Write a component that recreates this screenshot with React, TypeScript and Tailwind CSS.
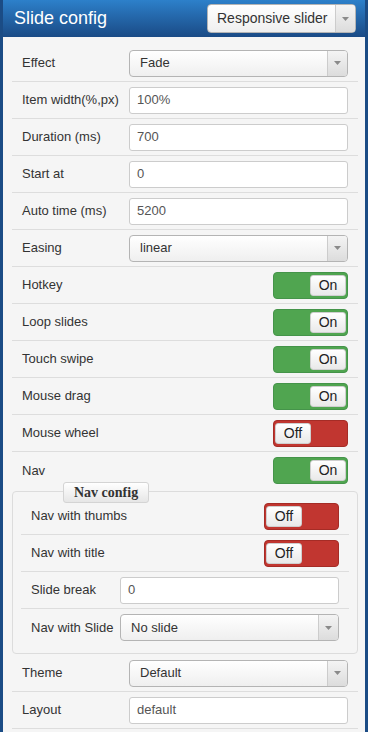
import type { ReactNode } from 'react';

const font = { fontFamily: '"Liberation Sans", Arial, sans-serif' };

const Arrow = ({ className = '' }: { className?: string }) => (
  <div
    className={`flex w-[20px] shrink-0 items-center justify-center self-stretch border-l border-[#ccc] bg-gradient-to-b from-[#f4f4f4] to-[#dcdcdc] ${className}`}
  >
    <svg width="7" height="4" viewBox="0 0 7 4">
      <path d="M0 0h7L3.5 4z" fill="#8a8a8a" />
    </svg>
  </div>
);

const Select = ({ value }: { value: string }) => (
  <div className="flex h-[27px] flex-1 overflow-hidden rounded-[4px] border border-[#b4b4b4] bg-gradient-to-b from-white to-[#efefef]">
    <span className="flex flex-1 items-center pl-[10px] text-[13px] text-[#333]">
      {value}
    </span>
    <Arrow />
  </div>
);

const Input = ({ value }: { value: string }) => (
  <div className="flex h-[27px] flex-1 items-center rounded-[3px] border border-[#ccc] bg-white pl-[7px] text-[13px] text-[#555]">
    {value}
  </div>
);

const Toggle = ({ on }: { on: boolean }) =>
  on ? (
    <div className="flex h-[27px] w-[75px] shrink-0 justify-end rounded-[4px] border border-[#45944a] bg-[#50a550] p-[2px] pr-[1px]">
      <div className="flex w-[36px] items-center justify-center rounded-[3px] border border-[#cfcfcf] bg-gradient-to-b from-white to-[#e9e9e9] text-[14px] text-[#222]">
        On
      </div>
    </div>
  ) : (
    <div className="flex h-[27px] w-[75px] shrink-0 justify-start rounded-[4px] border border-[#a52c26] bg-[#c13630] p-[2px] pl-[1px]">
      <div className="flex w-[36px] items-center justify-center rounded-[3px] border border-[#cfcfcf] bg-gradient-to-b from-white to-[#e9e9e9] text-[14px] text-[#222]">
        Off
      </div>
    </div>
  );

const Row = ({
  label,
  children,
  inner = false,
  last = false,
}: {
  label: string;
  children: ReactNode;
  inner?: boolean;
  last?: boolean;
}) => (
  <div
    className={`flex h-[37px] items-center px-[10px] ${
      last ? '' : 'border-b border-[#dddddd]'
    }`}
  >
    <span
      className={`${inner ? 'w-[89px]' : 'w-[107px]'} shrink-0 whitespace-nowrap text-[13px] text-[#333]`}
    >
      {label}
    </span>
    {children}
  </div>
);

const SwitchRow = ({
  label,
  on,
  inner = false,
  last = false,
}: {
  label: string;
  on: boolean;
  inner?: boolean;
  last?: boolean;
}) => (
  <Row label={label} inner={inner} last={last}>
    <div className="flex flex-1 justify-end">
      <Toggle on={on} />
    </div>
  </Row>
);

export default function App() {
  return (
    <div
      style={font}
      className="h-[732px] w-[368px] overflow-hidden border-x-[3px] border-[#1b4c85] bg-[#f5f5f5]"
    >
      <div className="flex h-[37px] items-center justify-between bg-gradient-to-b from-[#2d80ca] to-[#1a4b86] pl-[11px] pr-[9px]">
        <span className="text-[18px] text-white">Slide config</span>
        <div className="flex h-[29px] w-[149px] overflow-hidden rounded-[4px] border border-[#b4b4b4] bg-gradient-to-b from-white to-[#efefef]">
          <span className="flex flex-1 items-center whitespace-nowrap pl-[9px] text-[14px] text-[#333]">
            Responsive slider
          </span>
          <Arrow />
        </div>
      </div>

      <div className="ml-[9px] mr-[7px] pt-[8px]">
        <Row label="Effect">
          <Select value="Fade" />
        </Row>
        <Row label="Item width(%,px)">
          <Input value="100%" />
        </Row>
        <Row label="Duration (ms)">
          <Input value="700" />
        </Row>
        <Row label="Start at">
          <Input value="0" />
        </Row>
        <Row label="Auto time (ms)">
          <Input value="5200" />
        </Row>
        <Row label="Easing">
          <Select value="linear" />
        </Row>
        <SwitchRow label="Hotkey" on />
        <SwitchRow label="Loop slides" on />
        <SwitchRow label="Touch swipe" on />
        <SwitchRow label="Mouse drag" on />
        <SwitchRow label="Mouse wheel" on={false} />
        <SwitchRow label="Nav" on last />

        <div className="relative mb-[1px] mt-[2px] rounded-[4px] border border-[#dcdcdc] px-[8px] pb-[7px] pt-[6px]">
          <div
            style={{ fontFamily: '"Liberation Serif", "Times New Roman", serif' }}
            className="absolute left-[50px] top-[-10px] flex h-[21px] items-center rounded-[3px] border border-[#d4d4d4] bg-gradient-to-b from-white to-[#e6e6e6] px-[10px] text-[14px] font-bold text-[#333]"
          >
            Nav config
          </div>
          <SwitchRow label="Nav with thumbs" on={false} inner />
          <SwitchRow label="Nav with title" on={false} inner />
          <Row label="Slide break" inner>
            <Input value="0" />
          </Row>
          <Row label="Nav with Slide" inner last>
            <Select value="No slide" />
          </Row>
        </div>

        <Row label="Theme">
          <Select value="Default" />
        </Row>
        <Row label="Layout">
          <Input value="default" />
        </Row>
      </div>
    </div>
  );
}
